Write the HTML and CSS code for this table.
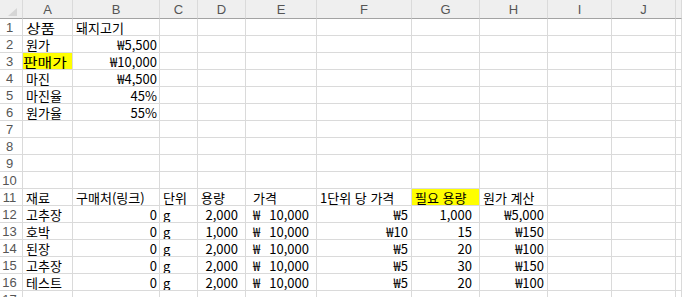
FILE: index.html
```html
<!DOCTYPE html>
<html lang="ko">
<head>
<meta charset="utf-8">
<title>Sheet</title>
<link rel="stylesheet" href="styles.css">
</head>
<body>
<div class="sheet">
  <div class="hd corner"><svg width="9" height="8" viewBox="0 0 9 8"><polygon points="9,0 9,8 0,8" fill="#d6d6d6"/></svg></div>
  <div class="hd">A</div><div class="hd">B</div><div class="hd">C</div><div class="hd">D</div><div class="hd">E</div><div class="hd">F</div><div class="hd">G</div><div class="hd">H</div><div class="hd">I</div><div class="hd">J</div><div class="hd"></div>

  <div class="rh">1</div><div class="c"><span class="wide">상품</span></div><div class="c">돼지고기</div><div class="c"></div><div class="c"></div><div class="c"></div><div class="c"></div><div class="c"></div><div class="c"></div><div class="c"></div><div class="c"></div><div class="c"></div>
  <div class="rh">2</div><div class="c">원가</div><div class="c r">₩5,500</div><div class="c"></div><div class="c"></div><div class="c"></div><div class="c"></div><div class="c"></div><div class="c"></div><div class="c"></div><div class="c"></div><div class="c"></div>
  <div class="rh">3</div><div class="c y tight"><span class="wide">판매가</span></div><div class="c r">₩10,000</div><div class="c"></div><div class="c"></div><div class="c"></div><div class="c"></div><div class="c"></div><div class="c"></div><div class="c"></div><div class="c"></div><div class="c"></div>
  <div class="rh">4</div><div class="c">마진</div><div class="c r">₩4,500</div><div class="c"></div><div class="c"></div><div class="c"></div><div class="c"></div><div class="c"></div><div class="c"></div><div class="c"></div><div class="c"></div><div class="c"></div>
  <div class="rh">5</div><div class="c">마진율</div><div class="c r">45%</div><div class="c"></div><div class="c"></div><div class="c"></div><div class="c"></div><div class="c"></div><div class="c"></div><div class="c"></div><div class="c"></div><div class="c"></div>
  <div class="rh">6</div><div class="c">원가율</div><div class="c r">55%</div><div class="c"></div><div class="c"></div><div class="c"></div><div class="c"></div><div class="c"></div><div class="c"></div><div class="c"></div><div class="c"></div><div class="c"></div>
  <div class="rh">7</div><div class="c"></div><div class="c"></div><div class="c"></div><div class="c"></div><div class="c"></div><div class="c"></div><div class="c"></div><div class="c"></div><div class="c"></div><div class="c"></div><div class="c"></div>
  <div class="rh">8</div><div class="c"></div><div class="c"></div><div class="c"></div><div class="c"></div><div class="c"></div><div class="c"></div><div class="c"></div><div class="c"></div><div class="c"></div><div class="c"></div><div class="c"></div>
  <div class="rh">9</div><div class="c"></div><div class="c"></div><div class="c"></div><div class="c"></div><div class="c"></div><div class="c"></div><div class="c"></div><div class="c"></div><div class="c"></div><div class="c"></div><div class="c"></div>
  <div class="rh">10</div><div class="c"></div><div class="c"></div><div class="c"></div><div class="c"></div><div class="c"></div><div class="c"></div><div class="c"></div><div class="c"></div><div class="c"></div><div class="c"></div><div class="c"></div>
  <div class="rh">11</div><div class="c">재료</div><div class="c">구매처(링크)</div><div class="c">단위</div><div class="c">용량</div><div class="c pe">가격</div><div class="c">1단위 당 가격</div><div class="c y">필요 용량</div><div class="c">원가 계산</div><div class="c"></div><div class="c"></div><div class="c"></div>
  <div class="rh">12</div><div class="c">고추장</div><div class="c r">0</div><div class="c">g</div><div class="c r cm">2,000</div><div class="c acc"><span>₩</span><span>10,000</span></div><div class="c r pr3">₩5</div><div class="c r cm">1,000</div><div class="c r pr3">₩5,000</div><div class="c"></div><div class="c"></div><div class="c"></div>
  <div class="rh">13</div><div class="c">호박</div><div class="c r">0</div><div class="c">g</div><div class="c r cm">1,000</div><div class="c acc"><span>₩</span><span>10,000</span></div><div class="c r pr3">₩10</div><div class="c r cm">15</div><div class="c r pr3">₩150</div><div class="c"></div><div class="c"></div><div class="c"></div>
  <div class="rh">14</div><div class="c">된장</div><div class="c r">0</div><div class="c">g</div><div class="c r cm">2,000</div><div class="c acc"><span>₩</span><span>10,000</span></div><div class="c r pr3">₩5</div><div class="c r cm">20</div><div class="c r pr3">₩100</div><div class="c"></div><div class="c"></div><div class="c"></div>
  <div class="rh">15</div><div class="c">고추장</div><div class="c r">0</div><div class="c">g</div><div class="c r cm">2,000</div><div class="c acc"><span>₩</span><span>10,000</span></div><div class="c r pr3">₩5</div><div class="c r cm">30</div><div class="c r pr3">₩150</div><div class="c"></div><div class="c"></div><div class="c"></div>
  <div class="rh">16</div><div class="c">테스트</div><div class="c r">0</div><div class="c">g</div><div class="c r cm">2,000</div><div class="c acc"><span>₩</span><span>10,000</span></div><div class="c r pr3">₩5</div><div class="c r cm">20</div><div class="c r pr3">₩100</div><div class="c"></div><div class="c"></div><div class="c"></div>
  <div class="rh">17</div><div class="c"></div><div class="c"></div><div class="c"></div><div class="c"></div><div class="c"></div><div class="c"></div><div class="c"></div><div class="c"></div><div class="c"></div><div class="c"></div><div class="c"></div>
</div>
</body>
</html>
```

FILE: styles.css
```css
html, body {
  margin: 0;
  padding: 0;
  background: #ffffff;
  overflow: hidden;
}

.sheet {
  display: grid;
  grid-template-columns: 23px 50px 87px 38px 48px 71px 95px 68px 68px 64px 64px 6px;
  grid-template-rows: 19px;
  grid-auto-rows: 17px;
  width: 682px;
  font-family: "Noto Sans CJK KR", sans-serif;
  font-size: 13px;
  color: #000000;
}

.sheet > div {
  box-sizing: border-box;
  border-right: 1px solid #dadada;
  border-bottom: 1px solid #dadada;
  display: flex;
  align-items: center;
  white-space: nowrap;
  overflow: hidden;
  line-height: 15px;
}

.hd {
  background: #efefef;
  color: #555555;
  justify-content: center;
  font-family: "Liberation Sans", sans-serif;
  font-size: 13px;
  padding-top: 1px;
  border-bottom: 1px solid #a3a3a3 !important;
}

.corner {
  justify-content: flex-end !important;
  align-items: flex-end !important;
  padding: 0 5px 2px 0;
}

.corner svg {
  display: block;
}

.rh {
  background: #ffffff;
  color: #555555;
  justify-content: center;
  font-family: "Liberation Sans", sans-serif;
  font-size: 13px;
  padding-right: 3px;
  padding-top: 1px;
}

.c {
  padding: 1px 2px 0 3px;
}

.wide {
  display: inline-block;
  transform: scaleX(1.22);
  transform-origin: left center;
}

.tight {
  padding-left: 0;
  padding-right: 0;
}

.r {
  justify-content: flex-end;
}

.cm {
  padding-right: 7px;
}

.pr3 {
  padding-right: 3px;
}

.pe {
  padding-left: 7px;
}

.acc {
  justify-content: space-between;
  padding-left: 7px;
  padding-right: 7px;
}

.y {
  background: #ffff00;
}
```
